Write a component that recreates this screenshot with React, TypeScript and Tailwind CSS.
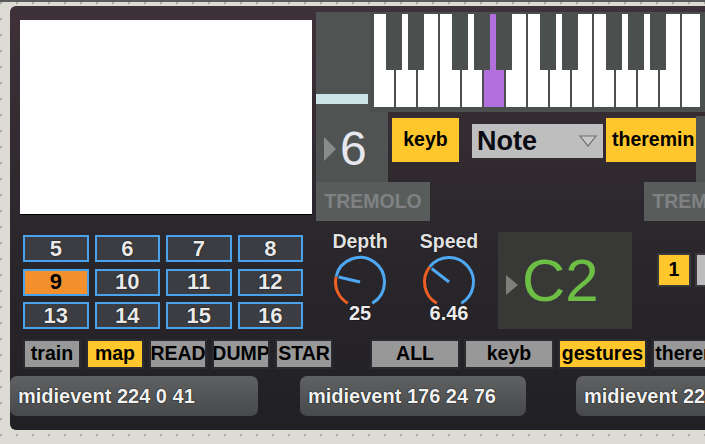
import React from 'react';

const font = "font-['Liberation_Sans',Arial,sans-serif]";
const halo = '[text-shadow:0_0_1px_#000,0_0_1px_#000]';

function polar(cx: number, cy: number, r: number, deg: number) {
  const a = (deg * Math.PI) / 180;
  return [cx + r * Math.sin(a), cy - r * Math.cos(a)];
}

function arc(cx: number, cy: number, r: number, a1: number, a2: number) {
  const [x1, y1] = polar(cx, cy, r, a1);
  const [x2, y2] = polar(cx, cy, r, a2);
  const large = a2 - a1 > 180 ? 1 : 0;
  return `M ${x1} ${y1} A ${r} ${r} 0 ${large} 1 ${x2} ${y2}`;
}

function Knob({ label, value, angle }: { label: string; value: string; angle: number }) {
  const [nx, ny] = polar(30, 31, 22, angle);
  return (
    <div className="flex w-[60px] flex-col items-center">
      <div className={`h-[19px] text-[19.5px] font-bold leading-none text-[#e2e2e2] ${halo}`}>{label}</div>
      <svg width="60" height="52" className="overflow-visible">
        <path d={arc(30, 31, 24.5, 210, angle)} fill="none" stroke="#ee5f26" strokeWidth="3" />
        <path d={arc(30, 31, 24.5, angle, 510)} fill="none" stroke="#4ea8f3" strokeWidth="3" />
        <line x1="30" y1="31" x2={nx} y2={ny} stroke="#4ea8f3" strokeWidth="3" />
      </svg>
      <div className={`text-[20px] font-bold leading-none text-[#ececec] ${halo}`}>{value}</div>
    </div>
  );
}

function Keyboard() {
  const whites = Array.from({ length: 15 }, (_, i) => i);
  return (
    <svg width="335" height="100" className="block shrink-0">
      <rect x="0" y="0" width="335" height="100" fill="#4b4f4e" />
      {whites.map((i) => (
        <rect
          key={i}
          x={4 + 22 * i}
          y="2"
          width={i === 14 ? 18 : 20}
          height="93"
          fill={i === 5 ? '#b26fde' : '#ffffff'}
        />
      ))}
      {whites
        .filter((i) => i < 14 && [0, 1, 3, 4, 5].includes(i % 7))
        .map((i) => (
          <rect key={'b' + i} x={22 * i + 16} y="2" width="16" height="56" fill="#4b4f4e" />
        ))}
    </svg>
  );
}

function SmallBtn({ label, on, w }: { label: string; on?: boolean; w: string }) {
  return (
    <div
      className={`flex h-[30px] shrink-0 items-center justify-center overflow-hidden whitespace-nowrap border-2 border-[#2c2b2f] text-[19.5px] font-bold leading-none text-black ${w} ${
        on ? 'bg-[#ffc72c]' : 'bg-[#989898]'
      }`}
    >
      {label}
    </div>
  );
}

function MidiBox({ text, w, ml }: { text: string; w: string; ml: string }) {
  return (
    <div
      className={`flex h-[40px] shrink-0 items-center overflow-hidden whitespace-nowrap rounded-[7px] bg-linear-to-b from-[#5f6163] to-[#47494b] pl-[8px] text-[20px] font-bold text-[#f2f2f2] ${halo} ${w} ${ml}`}
    >
      {text}
    </div>
  );
}

const cells = ['5', '6', '7', '8', '9', '10', '11', '12', '13', '14', '15', '16'];

export default function App() {
  return (
    <div
      className={`relative h-[444px] w-[705px] overflow-hidden bg-[#dcdcd5] bg-[radial-gradient(circle_at_1px_1px,#acaca4_1px,transparent_1.6px)] bg-size-[16px_16px] bg-position-[0px_2px] ${font}`}
    >
      <div className="h-[2px] bg-[#5a5a5a]" />
      <div className="ml-[10px] mt-[4px] flex h-[424px] w-[700px] flex-col rounded-[6px] bg-linear-to-b from-[#3f3139] via-[#2c282d] to-[#212024]">
        {/* top section */}
        <div className="flex h-[215px] items-start">
          <div className="ml-[10px] mt-[14px] h-[194px] w-[292px] shrink-0 bg-white shadow-[0_1px_0_#000]" />
          <div className="ml-[4px] mt-[6px] flex w-[400px] shrink-0 flex-col">
            <div className="flex h-[100px]">
              <div className="flex w-[54px] shrink-0 flex-col justify-end bg-[#4f5352] pb-[8px]">
                <div className="h-[10px] w-[52px] bg-[#cde5e8]" />
              </div>
              <Keyboard />
            </div>
            <div className="flex h-[70px] items-start">
              <div className="flex h-full w-[72px] shrink-0 items-center bg-[#4f5352] pl-[8px]">
                <svg width="12" height="24" className="mt-[3px]">
                  <polygon points="0,0 12,12 0,24" fill="#898c8b" />
                </svg>
                <span className="ml-[4px] mt-[3px] text-[48px] leading-none text-[#e7e7ef]">6</span>
              </div>
              <div className="ml-[4px] mt-[6px] flex h-[44px] w-[67px] shrink-0 items-center justify-center bg-[#ffc72c] text-[19.5px] font-bold text-black">
                keyb
              </div>
              <div className="ml-[13px] mt-[12px] flex h-[34px] w-[131px] shrink-0 items-center justify-between bg-[#bebebe] pl-[5px] pr-[6px]">
                <span className="text-[27px] font-bold leading-none text-[#0b0b14]">Note</span>
                <svg width="18" height="12">
                  <polygon points="1,1 17,1 9,11" fill="#c9c9c9" stroke="#6c6c6c" strokeWidth="1.2" />
                </svg>
              </div>
              <div className="ml-[3px] mt-[6px] flex h-[44px] w-[90px] shrink-0 items-center overflow-hidden whitespace-nowrap bg-[#ffc72c] pl-[6px] text-[19.5px] font-bold text-black">
                theremin
              </div>
              <div className="mt-[4px] h-[66px] w-[20px] shrink-0 bg-[#4f5352]" />
            </div>
            <div className="flex h-[39px]">
              <div className="flex w-[114px] shrink-0 items-center justify-center bg-[#585c5b] text-[19.5px] font-bold text-[#7f8183]">
                TREMOLO
              </div>
              <div className="ml-[214px] flex w-[114px] shrink-0 items-center justify-center bg-[#585c5b] text-[19.5px] font-bold text-[#7f8183]">
                TREMOLO
              </div>
            </div>
          </div>
        </div>

        {/* middle section */}
        <div className="mt-[11px] flex h-[97px] items-start">
          <div className="ml-[13px] mt-[3px] grid w-[280px] shrink-0 grid-cols-4 gap-x-[6px] gap-y-[6.5px]">
            {cells.map((c) => (
              <div
                key={c}
                className={`flex h-[27px] items-center justify-center border-2 border-[#4aa2ec] text-[22px] font-bold leading-none ${
                  c === '9' ? 'bg-[#f2902e] text-black' : `bg-[#3b3d43] text-[#e9e9e9] ${halo}`
                }`}
              >
                {c}
              </div>
            ))}
          </div>
          <div className="ml-[27px] shrink-0">
            <Knob label="Depth" value="25" angle={283} />
          </div>
          <div className="ml-[29px] shrink-0">
            <Knob label="Speed" value="6.46" angle={308} />
          </div>
          <div className="ml-[19px] flex h-[97px] w-[134px] shrink-0 items-center bg-[#383936] pl-[8px]">
            <svg width="12" height="20" className="mt-[8px]">
              <polygon points="0,0 12,10 0,20" fill="#7e7f7d" />
            </svg>
            <span className="ml-[4px] text-[60px] leading-none text-[#6cbe45]">C2</span>
          </div>
          <div className="ml-[25px] mt-[21px] flex h-[34px] w-[34px] shrink-0 items-center justify-center border-2 border-[#3a393d] bg-[#ffc72c] text-[19.5px] font-bold text-black">
            1
          </div>
          <div className="ml-[4px] mt-[21px] h-[34px] w-[20px] shrink-0 border-2 border-[#3a393d] bg-[#bdbdbd]" />
        </div>

        {/* buttons */}
        <div className="mt-[10px] flex h-[30px] pl-[13px]">
          <SmallBtn label="train" w="w-[58px]" />
          <div className="ml-[5px]">
            <SmallBtn label="map" on w="w-[58px]" />
          </div>
          <div className="ml-[5px]">
            <SmallBtn label="READ" w="w-[58px]" />
          </div>
          <div className="ml-[5px]">
            <SmallBtn label="DUMP" w="w-[58px]" />
          </div>
          <div className="ml-[5px]">
            <SmallBtn label="STAR" w="w-[58px]" />
          </div>
          <div className="ml-[37px]">
            <SmallBtn label="ALL" w="w-[90px]" />
          </div>
          <div className="ml-[4px]">
            <SmallBtn label="keyb" w="w-[90px]" />
          </div>
          <div className="ml-[4px]">
            <SmallBtn label="gestures" on w="w-[89px]" />
          </div>
          <div className="ml-[5px]">
            <SmallBtn label="theremin" w="w-[89px]" />
          </div>
        </div>

        {/* midievent messages */}
        <div className="mt-[7px] flex">
          <MidiBox text="midievent 224 0 41" w="w-[248px]" ml="ml-0" />
          <MidiBox text="midievent 176 24 76" w="w-[226px]" ml="ml-[42px]" />
          <MidiBox text="midievent 224 0 41" w="w-[200px]" ml="ml-[50px]" />
        </div>
      </div>
    </div>
  );
}
